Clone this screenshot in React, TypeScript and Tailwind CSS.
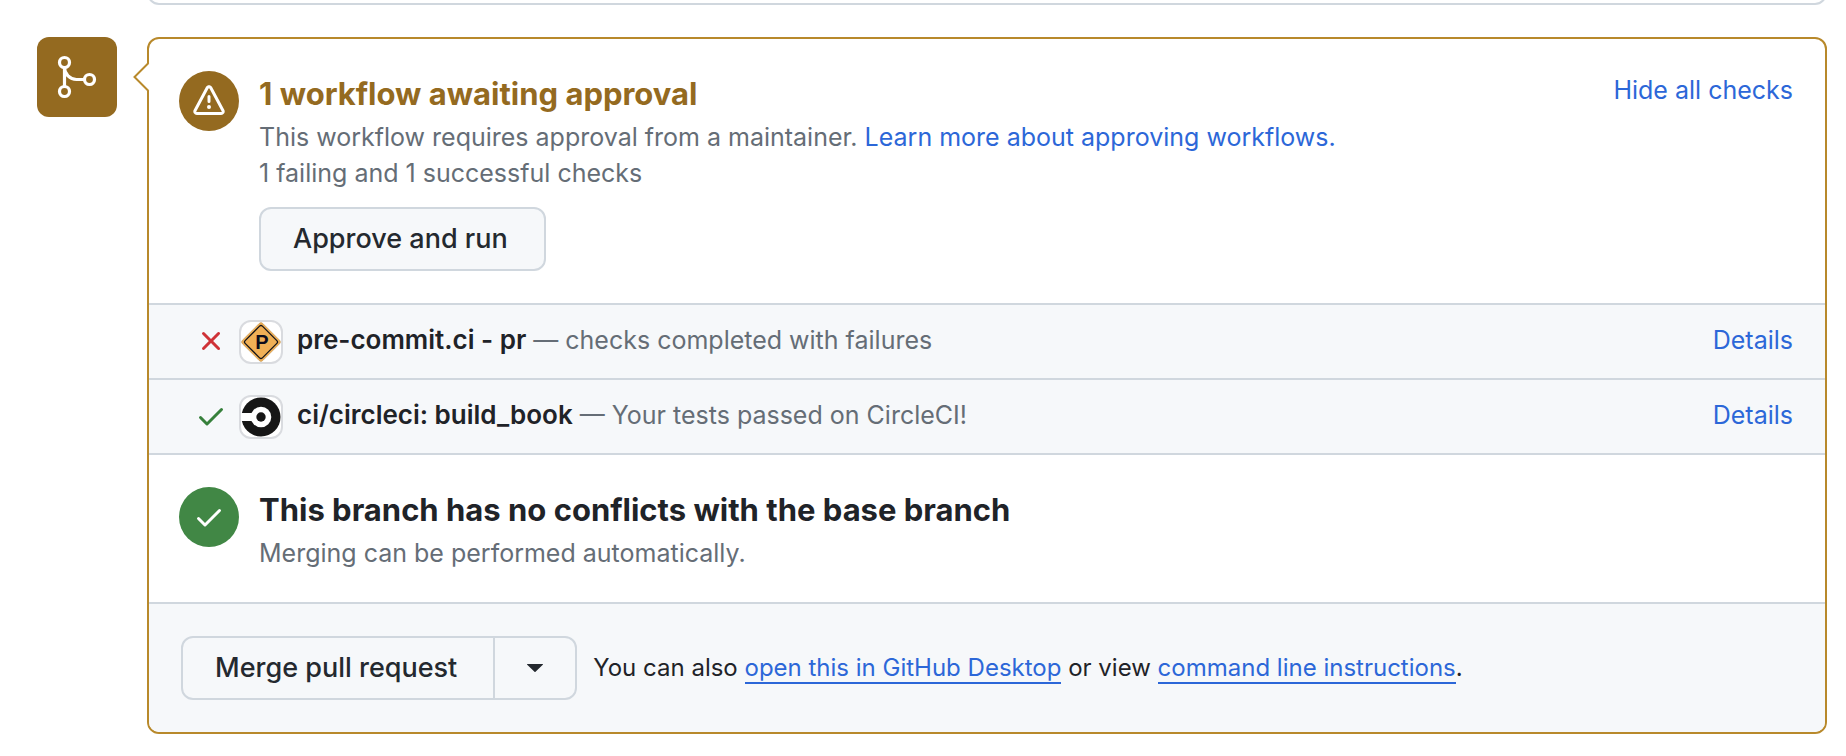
import type { ReactNode } from "react";

const ALERT =
  "M6.457 1.047c.659-1.234 2.427-1.234 3.086 0l6.082 11.378A1.75 1.75 0 0 1 14.082 15H1.918a1.75 1.75 0 0 1-1.543-2.575Zm1.763.707a.25.25 0 0 0-.44 0L1.698 13.132a.25.25 0 0 0 .22.368h12.164a.25.25 0 0 0 .22-.368Zm.53 3.996v2.5a.75.75 0 0 1-1.5 0v-2.5a.75.75 0 0 1 1.5 0ZM9 11a1 1 0 1 1-2 0 1 1 0 0 1 2 0Z";
const CHECK =
  "M13.78 4.22a.75.75 0 0 1 0 1.06l-7.25 7.25a.75.75 0 0 1-1.06 0L2.22 9.28a.751.751 0 0 1 .018-1.042.751.751 0 0 1 1.042-.018L6 10.94l6.72-6.72a.75.75 0 0 1 1.06 0Z";
const CROSS =
  "M3.72 3.72a.75.75 0 0 1 1.06 0L8 6.94l3.22-3.22a.749.749 0 0 1 1.275.326.749.749 0 0 1-.215.734L9.06 8l3.22 3.22a.749.749 0 0 1-.326 1.275.749.749 0 0 1-.734-.215L8 9.06l-3.22 3.22a.751.751 0 0 1-1.042-.018.751.751 0 0 1-.018-1.042L6.94 8 3.72 4.78a.75.75 0 0 1 0-1.06Z";

function Octicon({ path, className }: { path: string; className: string }) {
  return (
    <svg viewBox="0 0 16 16" fill="currentColor" aria-hidden="true" className={className}>
      <path d={path} />
    </svg>
  );
}

function MergeIcon() {
  return (
    <svg viewBox="0 0 24 24" fill="none" stroke="currentColor" strokeWidth="1.6" aria-hidden="true" className="size-12">
      <circle cx="5.75" cy="4.75" r="2.5" />
      <circle cx="5.75" cy="19.25" r="2.5" />
      <circle cx="18.25" cy="13.25" r="2.5" />
      <path d="M5.75 7.25v9.5M5.75 7.25a6 6 0 0 0 6 6h4" />
    </svg>
  );
}

function PreCommitLogo() {
  return (
    <svg viewBox="0 0 40 40" aria-hidden="true" className="size-10 shrink-0">
      <rect x="5.6" y="5.6" width="28.800" height="28.800" rx="2.5" fill="#f0b056" stroke="#b98a45" strokeWidth="0.5" transform="rotate(45 20 20)" />
      <rect x="7.8" y="7.8" width="24.400" height="24.400" rx="2" fill="none" stroke="#15151a" strokeWidth="1.3" transform="rotate(45 20 20)" />
      <text x="20.800" y="26.800" textAnchor="middle" fontSize="20" fontWeight="700" fill="#0c0c1c" className="font-['Liberation_Sans',sans-serif]">
        P
      </text>
    </svg>
  );
}

function CircleLogo() {
  return (
    <svg viewBox="0 0 40 40" aria-hidden="true" className="size-10 shrink-0">
      <circle cx="20" cy="20" r="19.5" fill="#161616" />
      <circle cx="20" cy="20" r="10.3" fill="#fff" />
      <path d="M0 16h12v8H0z" fill="#fff" />
      <circle cx="20" cy="20" r="4.7" fill="#161616" />
    </svg>
  );
}

function CheckRow({ icon, logo, name, note }: { icon: ReactNode; logo: ReactNode; name: string; note: string }) {
  return (
    <li className="flex items-start border-t-2 border-[#d0d7de] bg-[#f6f8fa] pt-[15px] pr-8 pb-[14px] pl-[46px]">
      <span className="flex h-[42px] shrink-0 items-center">{icon}</span>
      <span className="ml-3 flex size-11 shrink-0 items-center justify-center overflow-hidden rounded-xl border-2 border-[#d9dbdf] bg-white">
        {logo}
      </span>
      <p className="ml-[14px] flex-1 leading-10 text-[#656d76]">
        <strong className="text-[26px] font-semibold text-[#1f2328]">{name}</strong> — {note}
      </p>
      <a href="#details" className="leading-10 text-[#2c67d8]">
        Details
      </a>
    </li>
  );
}

export default function App() {
  return (
    <main className="bg-white pr-[19px] pl-[37px] font-[Inter,sans-serif] text-[25px] text-[#1f2328]">
      <div className="ml-[110px] h-[5px] overflow-hidden">
        <div className="-mt-10 h-[45px] rounded-xl border-2 border-[#d0d7de]" />
      </div>
      <div className="mt-8 flex items-start gap-[30px]">
        <div className="flex size-20 shrink-0 items-center justify-center rounded-xl bg-[#946a20] text-white">
          <MergeIcon />
        </div>
        <div className="relative flex-1 rounded-xl border-2 border-[#b8892b]">
          <svg viewBox="0 0 18 32" aria-hidden="true" className="absolute top-[22px] -left-4 h-8 w-[18px]">
            <path d="M16 2L2 16L16 30H18V2Z" fill="#fff" />
            <path d="M15.500 2L1.500 16L15.500 30" fill="none" stroke="#b8892b" strokeWidth="2" />
          </svg>

          <section className="flex items-start py-8 pr-8 pl-[30px]">
            <span className="flex size-[60px] shrink-0 items-center justify-center rounded-full bg-[#946a20] text-white">
              <Octicon path={ALERT} className="size-8" />
            </span>
            <div className="ml-5 flex-1">
              <h2 className="text-[31px] leading-[46px] font-bold text-[#946a20]">1 workflow awaiting approval</h2>
              <p className="mt-[2px] leading-9 text-[#656d76]">
                This workflow requires approval from a maintainer.{" "}
                <a href="#learn" className="text-[#2c67d8]">
                  Learn more about approving workflows.
                </a>
              </p>
              <p className="leading-9 text-[#656d76]">1 failing and 1 successful checks</p>
              <button type="button" className="mt-4 flex h-16 items-center rounded-xl border-2 border-[#d0d7de] bg-[#f6f8fa] pr-9 pl-8 text-[27px] font-medium text-[#24292f]">
                Approve and run
              </button>
            </div>
            <button type="button" className="leading-[38px] text-[#2c67d8]">
              Hide all checks
            </button>
          </section>

          <ul>
            <CheckRow
              icon={<Octicon path={CROSS} className="size-8 text-[#cf3237]" />}
              logo={<PreCommitLogo />}
              name="pre-commit.ci - pr"
              note="checks completed with failures"
            />
            <CheckRow
              icon={<Octicon path={CHECK} className="size-8 text-[#36803b]" />}
              logo={<CircleLogo />}
              name="ci/circleci: build_book"
              note="Your tests passed on CircleCI!"
            />
          </ul>

          <section className="flex items-start border-t-2 border-[#d0d7de] pt-8 pr-8 pb-[31px] pl-[30px]">
            <span className="flex size-[60px] shrink-0 items-center justify-center rounded-full bg-[#418745] text-white">
              <Octicon path={CHECK} className="size-8" />
            </span>
            <div className="ml-5">
              <h2 className="text-[31px] leading-[46px] font-bold">This branch has no conflicts with the base branch</h2>
              <p className="mt-[2px] leading-9 text-[#656d76]">Merging can be performed automatically.</p>
            </div>
          </section>

          <footer className="flex items-center rounded-b-[10px] border-t-2 border-[#d0d7de] bg-[#f6f8fa] px-8 py-8">
            <div className="flex h-16 rounded-xl border-2 border-[#d0d7de] text-[#24292f]">
              <button type="button" className="pr-9 pl-8 text-[27px] font-medium">
                Merge pull request
              </button>
              <button type="button" aria-label="Select merge method" className="flex w-[82px] items-center justify-center border-l-2 border-[#d0d7de]">
                <svg viewBox="0 0 16 8" fill="currentColor" aria-hidden="true" className="h-2 w-4">
                  <path d="M0.500 0h15c.5 0 .6.400.300.700L8.500 7.800c-.3.3-.7.3-1 0L.2.700C-.1.400 0 0 .500 0Z" />
                </svg>
              </button>
            </div>
            <p className="ml-4 text-[24px] leading-9">
              You can also{" "}
              <a href="#desktop" className="border-b-2 border-[#2c67d8] text-[#2c67d8]">
                open this in GitHub Desktop
              </a>{" "}
              or view{" "}
              <a href="#cli" className="border-b-2 border-[#2c67d8] text-[#2c67d8]">
                command line instructions
              </a>
              .
            </p>
          </footer>
        </div>
      </div>
    </main>
  );
}
